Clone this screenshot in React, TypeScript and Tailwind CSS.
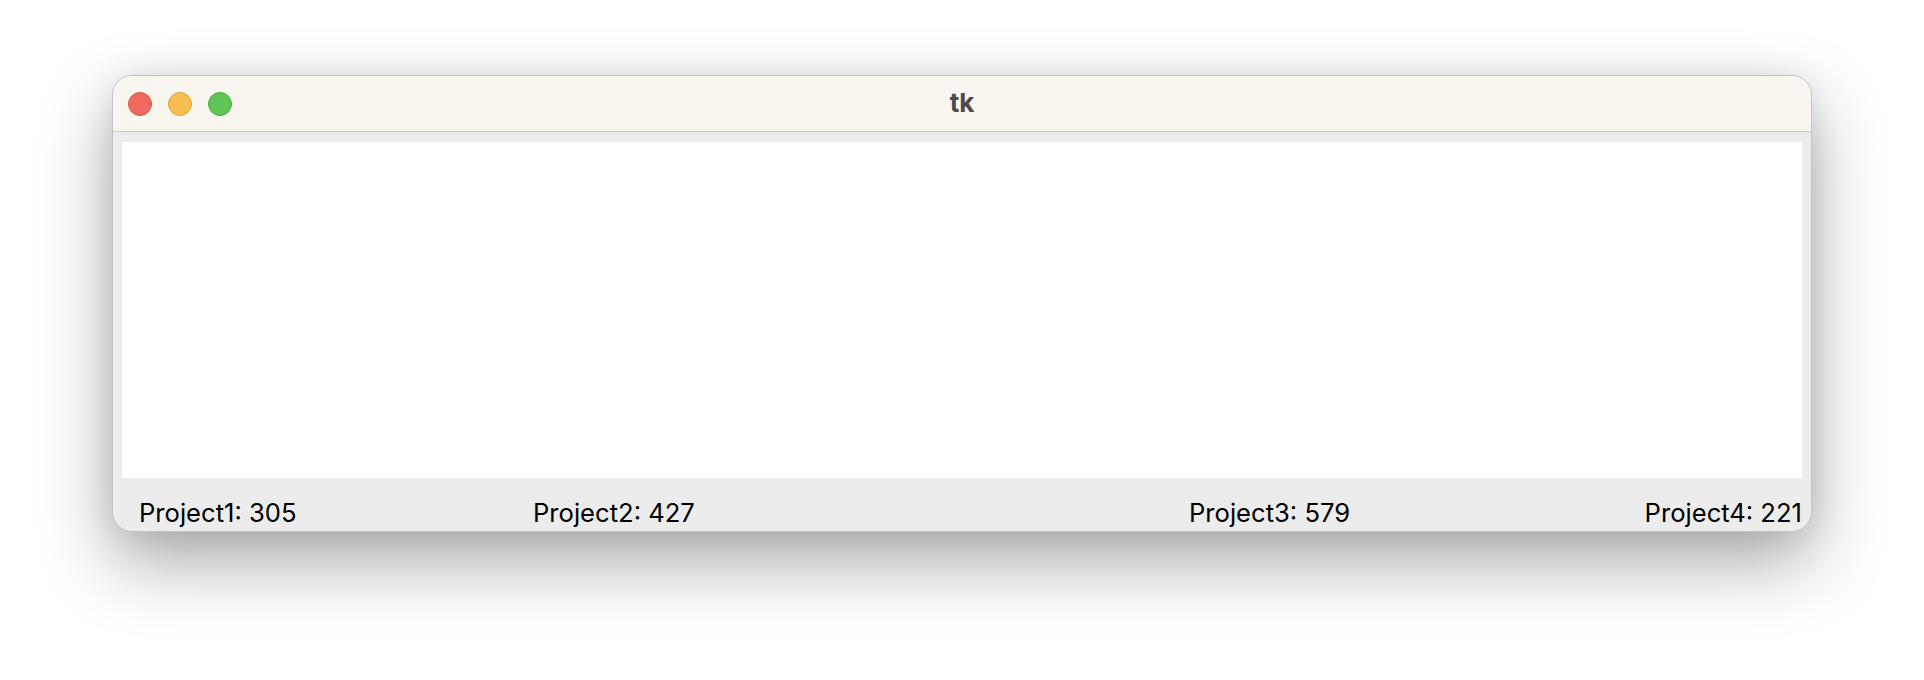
const PROJECTS = [
  { name: "Project1", count: 305, width: "w-[394px]" },
  { name: "Project2", count: 427, width: "w-[656px]" },
  { name: "Project3", count: 579, width: "" },
];

export default function App() {
  return (
    <div className="min-h-[680px] w-[1924px] bg-white pt-[75px] pl-[112px] font-['Inter',sans-serif]">
      <div className="w-[1700px] h-[457px] flex flex-col rounded-[20px] border border-[#c2c2c2] bg-[#ececec] overflow-hidden shadow-[0_30px_70px_rgba(0,0,0,0.34),0_0_30px_rgba(0,0,0,0.08)]">
        <div className="relative h-[56px] shrink-0 flex items-center bg-[#f9f6ef] border-b border-[#c9c9c9] px-[15px]">
          <div className="flex items-center gap-[16px]">
            <span className="w-[24px] h-[24px] rounded-full bg-[#ee6a5f] border border-[#d5564b]" />
            <span className="w-[24px] h-[24px] rounded-full bg-[#f6be50] border border-[#dca43c]" />
            <span className="w-[24px] h-[24px] rounded-full bg-[#61c555] border border-[#4ea843]" />
          </div>
          <div className="absolute inset-0 flex items-center justify-center pb-[2px] text-[26px] font-bold text-[#4b4b4b]">
            tk
          </div>
        </div>
        <div className="flex-1 flex flex-col px-[9px] pt-[10px]">
          <div className="h-[336px] bg-white" />
          <div className="flex items-start pt-[19px] pl-[17px] text-[25.6px] text-black leading-[31px]">
            {PROJECTS.map((p) => (
              <div key={p.name} className={p.width}>
                {p.name}: {p.count}
              </div>
            ))}
            <div className="ml-auto">Project4: 221</div>
          </div>
        </div>
      </div>
    </div>
  );
}
